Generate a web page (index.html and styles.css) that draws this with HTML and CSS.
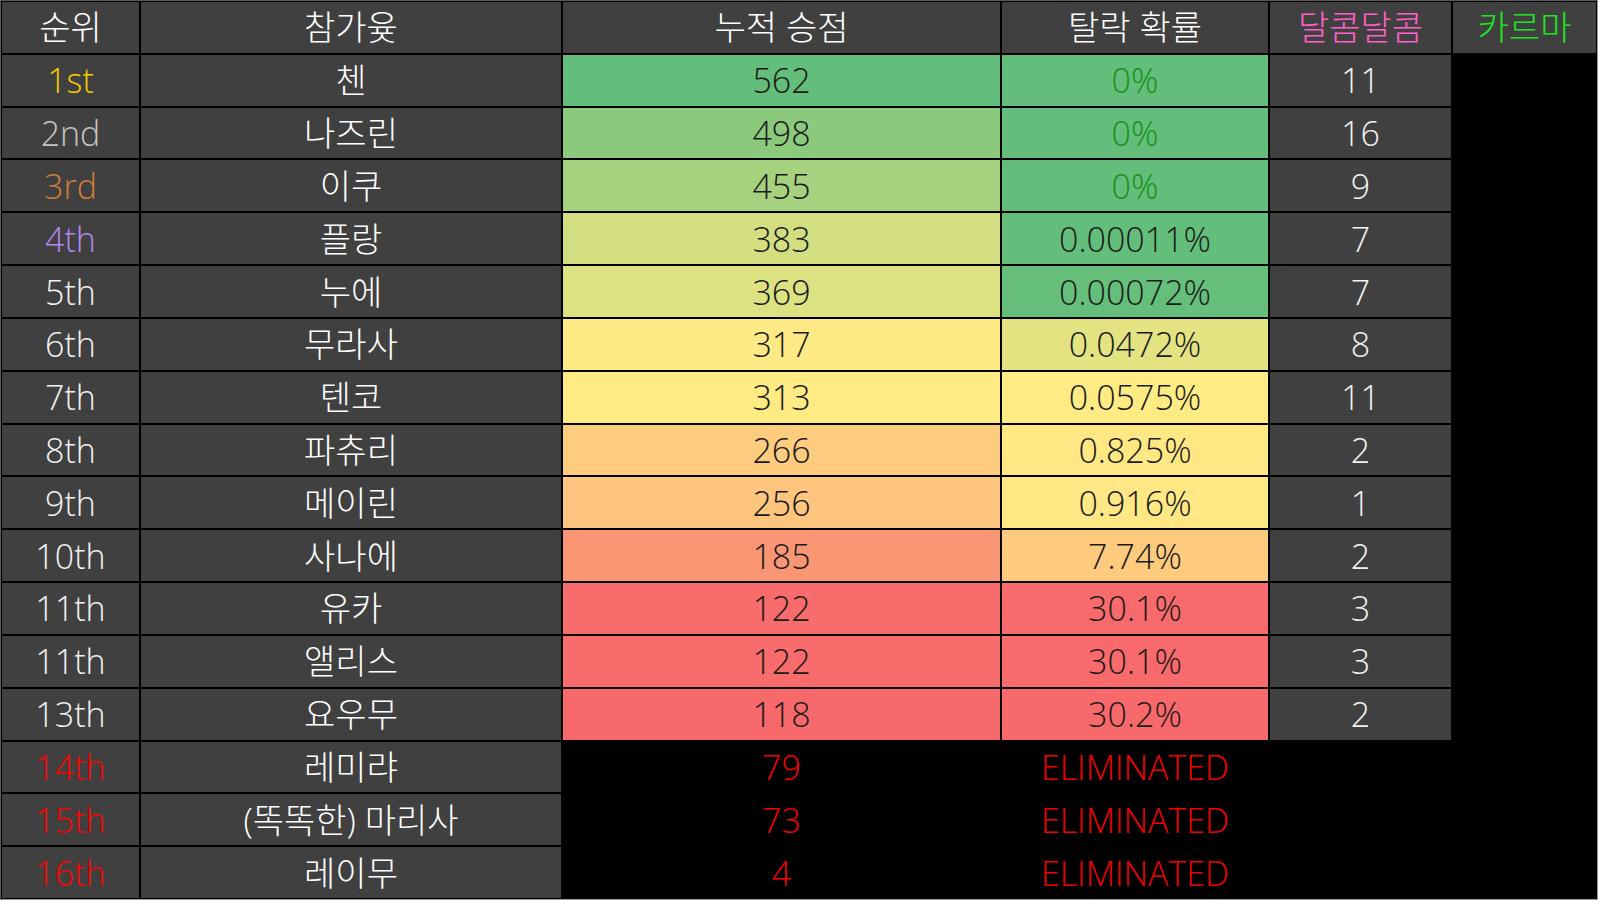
FILE: index.html
```html
<!DOCTYPE html>
<html lang="ko">
<head>
<meta charset="utf-8">
<title>순위표</title>
<link rel="stylesheet" href="styles.css">
</head>
<body>
<div class="board">
  <div class="cell head">순위</div>
  <div class="cell head">참가윶</div>
  <div class="cell head">누적 승점</div>
  <div class="cell head">탈락 확률</div>
  <div class="cell head pink">달콤달콤</div>
  <div class="cell head lime">카르마</div>

  <div class="cell rank gold">1st</div><div class="cell name">첸</div>
  <div class="cell num" style="background:#63be7b">562</div><div class="cell num safe" style="background:#63be7b">0%</div>
  <div class="cell sweet">11</div><div class="cell void"></div>

  <div class="cell rank silver">2nd</div><div class="cell name">나즈린</div>
  <div class="cell num" style="background:#8bca7d">498</div><div class="cell num safe" style="background:#63be7b">0%</div>
  <div class="cell sweet">16</div><div class="cell void"></div>

  <div class="cell rank bronze">3rd</div><div class="cell name">이쿠</div>
  <div class="cell num" style="background:#a6d17f">455</div><div class="cell num safe" style="background:#63be7b">0%</div>
  <div class="cell sweet">9</div><div class="cell void"></div>

  <div class="cell rank violet">4th</div><div class="cell name">플랑</div>
  <div class="cell num" style="background:#d3de81">383</div><div class="cell num" style="background:#63be7b">0.00011%</div>
  <div class="cell sweet">7</div><div class="cell void"></div>

  <div class="cell rank">5th</div><div class="cell name">누에</div>
  <div class="cell num" style="background:#dce182">369</div><div class="cell num" style="background:#65bf7b">0.00072%</div>
  <div class="cell sweet">7</div><div class="cell void"></div>

  <div class="cell rank">6th</div><div class="cell name">무라사</div>
  <div class="cell num" style="background:#fdea84">317</div><div class="cell num" style="background:#e3e382">0.0472%</div>
  <div class="cell sweet">8</div><div class="cell void"></div>

  <div class="cell rank">7th</div><div class="cell name">텐코</div>
  <div class="cell num" style="background:#ffeb84">313</div><div class="cell num" style="background:#ffeb84">0.0575%</div>
  <div class="cell sweet">11</div><div class="cell void"></div>

  <div class="cell rank">8th</div><div class="cell name">파츄리</div>
  <div class="cell num" style="background:#fdcc7e">266</div><div class="cell num" style="background:#ffe883">0.825%</div>
  <div class="cell sweet">2</div><div class="cell void"></div>

  <div class="cell rank">9th</div><div class="cell name">메이린</div>
  <div class="cell num" style="background:#fdc57d">256</div><div class="cell num" style="background:#ffe883">0.916%</div>
  <div class="cell sweet">1</div><div class="cell void"></div>

  <div class="cell rank">10th</div><div class="cell name">사나에</div>
  <div class="cell num" style="background:#fa9674">185</div><div class="cell num" style="background:#fdca7e">7.74%</div>
  <div class="cell sweet">2</div><div class="cell void"></div>

  <div class="cell rank">11th</div><div class="cell name">유카</div>
  <div class="cell num" style="background:#f86c6c">122</div><div class="cell num" style="background:#f86a6b">30.1%</div>
  <div class="cell sweet">3</div><div class="cell void"></div>

  <div class="cell rank">11th</div><div class="cell name">앨리스</div>
  <div class="cell num" style="background:#f86c6c">122</div><div class="cell num" style="background:#f86a6b">30.1%</div>
  <div class="cell sweet">3</div><div class="cell void"></div>

  <div class="cell rank">13th</div><div class="cell name">요우무</div>
  <div class="cell num" style="background:#f8696b">118</div><div class="cell num" style="background:#f8696b">30.2%</div>
  <div class="cell sweet">2</div><div class="cell void"></div>

  <div class="cell rank out">14th</div><div class="cell name">레미랴</div>
  <div class="cell num out">79</div><div class="cell num out">ELIMINATED</div>
  <div class="cell void"></div><div class="cell void"></div>

  <div class="cell rank out">15th</div><div class="cell name">(똑똑한) 마리사</div>
  <div class="cell num out">73</div><div class="cell num out">ELIMINATED</div>
  <div class="cell void"></div><div class="cell void"></div>

  <div class="cell rank out">16th</div><div class="cell name">레이무</div>
  <div class="cell num out">4</div><div class="cell num out">ELIMINATED</div>
  <div class="cell void"></div><div class="cell void"></div>
</div>
</body>
</html>
```

FILE: styles.css
```css
html, body {
  margin: 0;
  padding: 0;
  background: #ffffff;
}

.board {
  box-sizing: border-box;
  width: 1598px;
  height: 900px;
  display: grid;
  grid-template-columns: 137px 420px 437px 266px 181px 143px;
  grid-template-rows: repeat(17, 1fr);
  gap: 2px;
  padding: 1px;
  background: #000000;
  border: 1px solid #9a9a9a;
  border-top-color: #5a5a5a;
  border-left-color: #5a5a5a;
  font-family: "Open Sans", "Noto Sans CJK KR", sans-serif;
  font-weight: 300;
  font-size: 34px;
}

.cell {
  display: flex;
  align-items: center;
  justify-content: center;
  background: #404040;
  color: #f2f2f2;
  line-height: 1;
  white-space: nowrap;
}

.head,
.name {
  font-family: "Open Sans", "Noto Sans CJK KR Light", "Noto Sans CJK KR DemiLight", "Noto Sans CJK KR", sans-serif;
  font-weight: 300;
  color: #ffffff;
}

.head.pink { color: #ff5fc8; }
.head.lime { color: #1ee61e; }

.rank { color: #f2f2f2; }
.rank.gold { color: #f5cc00; }
.rank.silver { color: #c4c4c4; }
.rank.bronze { color: #cf7e3a; }
.rank.violet { color: #b488ee; }
.rank.out { color: #ff0000; }

.num {
  color: #1a1a1a;
}

.num.safe { color: #179117; }

.num.out {
  background: transparent;
  color: #f00000;
}

.sweet { color: #f2f2f2; }

.void { background: transparent; }
```
